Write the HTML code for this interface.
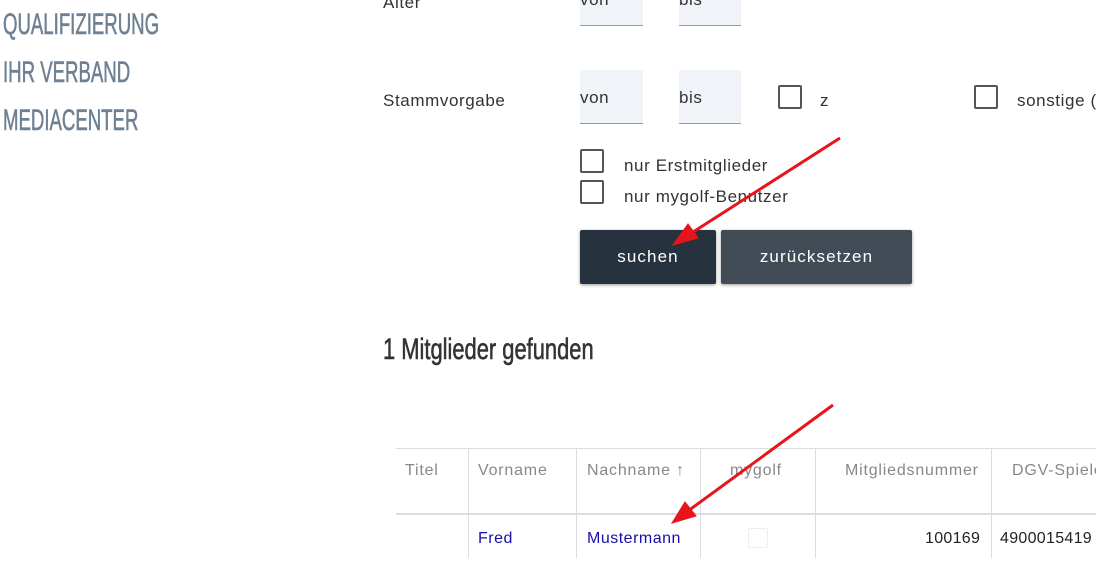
<!DOCTYPE html><html><head><meta charset="utf-8"><style>
body{margin:0;width:1096px;height:574px;overflow:hidden;background:#fff;font-family:"Liberation Sans",sans-serif;position:relative}
.a{position:absolute;white-space:nowrap}
.nav{color:#6f8093;font-size:30px;transform:scaleX(.62);transform-origin:left top;-webkit-text-stroke:.6px #6f8093}
.lbl{font-size:17px;color:#333;letter-spacing:.6px}
.inp{position:absolute;background:#f0f4f8;border-bottom:1px solid #999;font-size:17px;color:#333;box-sizing:border-box;line-height:56px;letter-spacing:.6px}
.cb{position:absolute;border:2px solid #555;border-radius:2px;box-sizing:border-box}
.btn{position:absolute;color:#fff;font-size:17px;text-align:center;line-height:54px;border-radius:2px;box-shadow:0 1px 3px rgba(0,0,0,.4);letter-spacing:1.1px}
.th{font-size:16px;color:#888;top:462px;letter-spacing:.8px}
.vl{position:absolute;width:1px;background:#ddd;top:448px;height:110px}
</style></head><body>
<div class="a nav" style="left:3px;top:8px">QUALIFIZIERUNG</div>
<div class="a nav" style="left:3px;top:56px">IHR VERBAND</div>
<div class="a nav" style="left:3px;top:104px">MEDIACENTER</div>

<div class="a lbl" style="left:383px;top:-7px">Alter</div>
<div class="inp" style="left:580px;top:-28px;width:63px;height:54px">von</div>
<div class="inp" style="left:679px;top:-28px;width:62px;height:54px">bis</div>

<div class="a lbl" style="left:383px;top:91px">Stammvorgabe</div>
<div class="inp" style="left:580px;top:70px;width:63px;height:54px">von</div>
<div class="inp" style="left:679px;top:70px;width:62px;height:54px">bis</div>
<div class="cb" style="left:778px;top:85px;width:24px;height:24px"></div>
<div class="a lbl" style="left:820px;top:91px">z</div>
<div class="cb" style="left:974px;top:85px;width:24px;height:24px"></div>
<div class="a lbl" style="left:1017px;top:91px">sonstige (</div>

<div class="cb" style="left:580px;top:149px;width:24px;height:24px"></div>
<div class="a lbl" style="left:624px;top:156px">nur Erstmitglieder</div>
<div class="cb" style="left:580px;top:180px;width:24px;height:24px"></div>
<div class="a lbl" style="left:624px;top:187px">nur mygolf-Benutzer</div>

<div class="btn" style="left:580px;top:230px;width:136px;height:54px;background:#27323f">suchen</div>
<div class="btn" style="left:721px;top:230px;width:191px;height:54px;background:#424c57">zurücksetzen</div>

<div class="a" style="left:383px;top:333px;font-size:30px;color:#333;transform:scaleX(.73);transform-origin:left top;-webkit-text-stroke:.6px #333">1 Mitglieder gefunden</div>

<div style="position:absolute;left:396px;top:448px;width:700px;height:1px;background:#ddd"></div>
<div style="position:absolute;left:396px;top:513px;width:700px;height:2px;background:#ddd"></div>
<div class="vl" style="left:468px"></div><div class="vl" style="left:576px"></div><div class="vl" style="left:700px"></div><div class="vl" style="left:815px"></div><div class="vl" style="left:991px"></div>
<div class="a th" style="left:405px">Titel</div>
<div class="a th" style="left:478px">Vorname</div>
<div class="a th" style="left:587px">Nachname ↑</div>
<div class="a th" style="left:730px">mygolf</div>
<div class="a th" style="left:845px">Mitgliedsnummer</div>
<div class="a th" style="left:1012px">DGV-Spieler</div>
<div class="a" style="left:478px;top:530px;font-size:16px;color:#1a0dab;letter-spacing:.5px">Fred</div>
<div class="a" style="left:587px;top:530px;font-size:16px;color:#1a0dab;letter-spacing:.5px">Mustermann</div>
<div style="position:absolute;left:748px;top:528px;width:18px;height:18px;border:1px solid #eee;border-radius:2px"></div>
<div class="a" style="left:925px;top:530px;font-size:16px;color:#222;letter-spacing:.3px">100169</div>
<div class="a" style="left:1000px;top:530px;font-size:16px;color:#222;letter-spacing:.3px">4900015419</div>

<svg style="position:absolute;left:0;top:0" width="1096" height="574">
<g stroke="#e8141b" stroke-width="3" fill="#e8141b">
<line x1="840" y1="138" x2="690" y2="234"/>
<polygon points="673,245 688,224 698,238" stroke-width="1"/>
<line x1="833" y1="405" x2="688" y2="511"/>
<polygon points="672,523 685,502 696,516" stroke-width="1"/>
</g></svg>
</body></html>
